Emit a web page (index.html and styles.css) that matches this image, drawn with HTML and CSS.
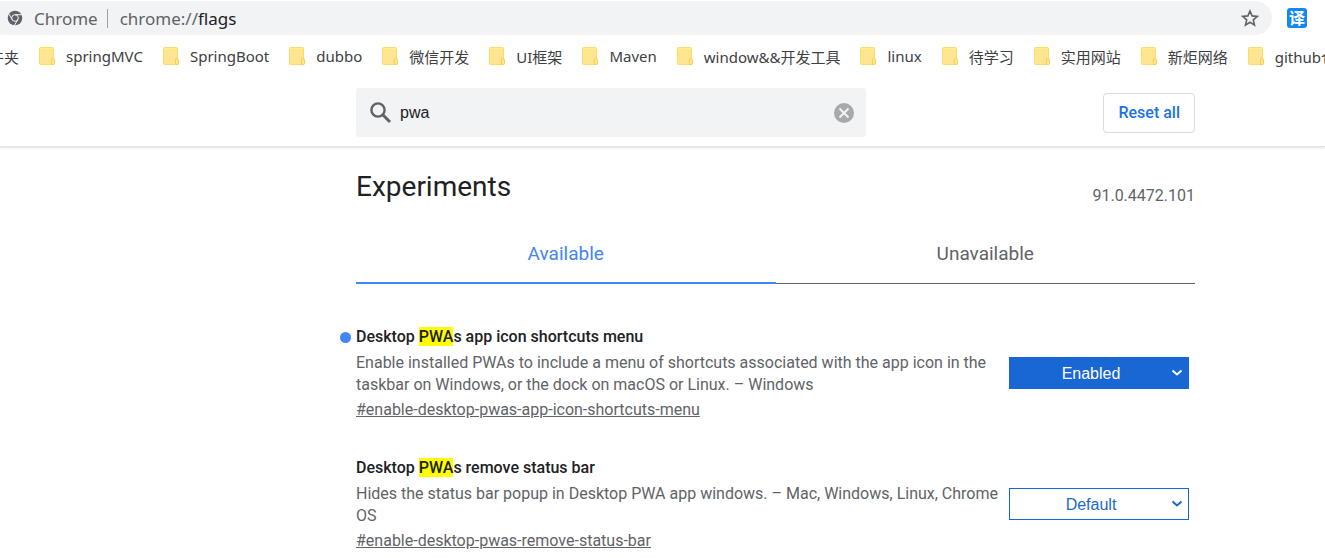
FILE: index.html
```html
<!DOCTYPE html>
<html lang="en">
<head>
<meta charset="utf-8">
<title>Experiments</title>
<link rel="stylesheet" href="styles.css">
</head>
<body>
<svg class="defs" aria-hidden="true">
  <symbol id="folder" viewBox="0 0 16 18">
    <rect x="0.5" y="0.5" width="14" height="17" rx="1" fill="#ffe592" stroke="#fbdc68"/>
    <path d="M1 1.500h13" stroke="#fff27d"/>
    <path d="M12.500 17.500v-4.500q0-1.500 1.500-1.500t1.500 1.500v3.500q0 1-1 1z" fill="#ffe592" stroke="#f8d04e"/>
  </symbol>
</svg>
<header class="browser">
  <div class="toolbar">
    <div class="omnibox">
      <svg class="site-icon" viewBox="0 0 16 16" aria-hidden="true">
        <circle cx="8" cy="8" r="7.300" fill="#5f6368"/>
        <circle cx="8" cy="8" r="3.300" fill="none" stroke="#f1f3f4" stroke-width="1"/>
        <path d="M8 4.700h6.800M5.200 9.600 1.800 3.800M10.800 9.600 7.400 15.400" fill="none" stroke="#f1f3f4" stroke-width="1"/>
      </svg>
      <span class="site-name">Chrome</span>
      <span class="url"><span class="scheme">chrome://</span>flags</span>
      <button class="star" type="button" aria-label="Bookmark this tab">
        <svg viewBox="0 0 18 18"><path d="M9 2l2.100 4.900 5.200.5-4 3.500 1.200 5.200L9 13.300l-4.500 2.800 1.200-5.200-4-3.500 5.200-.5z" fill="none" stroke="#5f6368" stroke-width="1.600"/></svg>
      </button>
    </div>
    <button class="translate" type="button">译</button>
  </div>
  <nav class="bookmarks">
    <a class="bookmark" href="#">件夹</a>
    <a class="bookmark" href="#"><svg><use href="#folder"/></svg>springMVC</a>
    <a class="bookmark" href="#"><svg><use href="#folder"/></svg>SpringBoot</a>
    <a class="bookmark" href="#"><svg><use href="#folder"/></svg>dubbo</a>
    <a class="bookmark" href="#"><svg><use href="#folder"/></svg>微信开发</a>
    <a class="bookmark" href="#"><svg><use href="#folder"/></svg>UI框架</a>
    <a class="bookmark" href="#"><svg><use href="#folder"/></svg>Maven</a>
    <a class="bookmark" href="#"><svg><use href="#folder"/></svg>window&amp;&amp;开发工具</a>
    <a class="bookmark" href="#"><svg><use href="#folder"/></svg>linux</a>
    <a class="bookmark" href="#"><svg><use href="#folder"/></svg>待学习</a>
    <a class="bookmark" href="#"><svg><use href="#folder"/></svg>实用网站</a>
    <a class="bookmark" href="#"><svg><use href="#folder"/></svg>新炬网络</a>
    <a class="bookmark" href="#"><svg><use href="#folder"/></svg>github仓</a>
  </nav>
</header>
<div class="search-bar">
  <div class="search">
    <svg class="search-icon" viewBox="0 0 22 22" aria-hidden="true"><circle cx="8" cy="8" r="6.600" fill="none" stroke="#5f6368" stroke-width="2.400"/><path d="M12.800 12.800 20 20" stroke="#5f6368" stroke-width="3"/></svg>
    <input class="search-input" type="text" value="pwa" aria-label="Search flags">
    <button class="clear" type="button" aria-label="Clear search">
      <svg viewBox="0 0 20 20"><circle cx="10" cy="10" r="10" fill="#a7aaad"/><path d="M5.500 5.500l9 9M14.500 5.500l-9 9" stroke="#f1f3f4" stroke-width="2"/></svg>
    </button>
  </div>
  <button class="reset" type="button">Reset all</button>
</div>
<main class="content">
  <div class="heading">
    <h1 class="title">Experiments</h1>
    <span class="version">91.0.4472.101</span>
  </div>
  <div class="tabs" role="tablist">
    <button class="tab tab-selected" type="button" role="tab" aria-selected="true">Available</button>
    <button class="tab" type="button" role="tab" aria-selected="false">Unavailable</button>
  </div>
  <section class="experiment">
    <div class="details">
      <h2 class="name name-changed">Desktop <mark>PWA</mark>s app icon shortcuts menu</h2>
      <p class="description">Enable installed PWAs to include a menu of shortcuts associated with the app icon in the taskbar on Windows, or the dock on macOS or Linux. – Windows</p>
      <a class="permalink" href="#enable-desktop-pwas-app-icon-shortcuts-menu">#enable-desktop-pwas-app-icon-shortcuts-menu</a>
    </div>
    <div class="choice choice-changed">
      <select aria-label="Desktop PWAs app icon shortcuts menu"><option>Default</option><option selected>Enabled</option><option>Disabled</option></select>
      <svg class="chevron" viewBox="0 0 12 8" aria-hidden="true"><path d="M1.500 1.500 6 5.500l4.500-4" fill="none" stroke="currentColor" stroke-width="2"/></svg>
    </div>
  </section>
  <section class="experiment">
    <div class="details">
      <h2 class="name">Desktop <mark>PWA</mark>s remove status bar</h2>
      <p class="description">Hides the status bar popup in Desktop PWA app windows. – Mac, Windows, Linux, Chrome OS</p>
      <a class="permalink" href="#enable-desktop-pwas-remove-status-bar">#enable-desktop-pwas-remove-status-bar</a>
    </div>
    <div class="choice">
      <select aria-label="Desktop PWAs remove status bar"><option selected>Default</option><option>Enabled</option><option>Disabled</option></select>
      <svg class="chevron" viewBox="0 0 12 8" aria-hidden="true"><path d="M1.500 1.500 6 5.500l4.500-4" fill="none" stroke="currentColor" stroke-width="2"/></svg>
    </div>
  </section>
</main>
</body>
</html>
```
FILE: styles.css
```css
* { box-sizing: border-box; }
body {
  margin: 0;
  overflow-x: hidden;
  background: #fff;
  color: #202124;
  font-family: Roboto, "Liberation Sans", sans-serif;
  font-size: 16px;
}
button {
  padding: 0;
  border: 0;
  background: none;
  font-family: inherit;
  cursor: pointer;
}
button svg { display: block; }
.defs { position: absolute; width: 0; height: 0; }

.browser { font-family: "Noto Sans", "Noto Sans CJK SC", sans-serif; }
.toolbar {
  display: flex;
  align-items: center;
  gap: 15px;
  padding: 1px 18px 0 0;
}
.omnibox {
  display: flex;
  flex: 1;
  align-items: center;
  height: 34px;
  margin-left: -12px;
  padding: 0 13px 0 19px;
  border-radius: 17px;
  background: #f1f3f4;
  font-size: 17px;
}
.site-icon { width: 16px; height: 16px; margin-right: 11px; }
.site-name {
  padding-right: 9px;
  border-right: 1px solid #9aa0a6;
  color: #5f6368;
  line-height: 19px;
}
.url { padding-left: 12px; color: #202124; line-height: 19px; }
.scheme { color: #5f6368; }
.star { margin-left: auto; }
.star svg { width: 18px; height: 18px; }
.translate {
  width: 20px;
  height: 20px;
  border-radius: 3px;
  background: #1388f5;
  color: #fff;
  font-size: 16px;
  font-weight: 700;
  line-height: 20px;
}
.bookmarks {
  display: flex;
  gap: 20px;
  margin-left: -11px;
  padding: 9px 0 8px;
  overflow: hidden;
}
.bookmark {
  display: flex;
  flex: none;
  align-items: center;
  gap: 11px;
  height: 24px;
  color: #3c4043;
  font-size: 15px;
  text-decoration: none;
}
.bookmark svg { width: 16px; height: 18px; }

.search-bar {
  display: flex;
  align-items: center;
  justify-content: space-between;
  padding: 12px 130px 9px 356px;
  border-bottom: 1px solid #e2e3e4;
  box-shadow: 0 1px 2px #e4e4e4;
}
.search {
  display: flex;
  flex: 0 1 510px;
  align-items: center;
  height: 49px;
  padding: 0 12px 0 14px;
  border-radius: 3px;
  background: #f1f3f4;
}
.search-icon { width: 22px; height: 22px; margin-right: 8px; }
.search-input {
  flex: 1;
  min-width: 0;
  padding: 0;
  border: 0;
  outline: 0;
  background: none;
  color: #202124;
  font: 16px "Liberation Sans", Arial, sans-serif;
}
.clear svg { width: 20px; height: 20px; }
.reset {
  height: 40px;
  padding: 0 14px;
  border: 1px solid #dadce0;
  border-radius: 4px;
  color: #1a73e8;
  font-size: 16px;
  font-weight: 500;
}

.content { padding: 22px 130px 0 356px; }
.heading {
  display: flex;
  align-items: flex-end;
  justify-content: space-between;
}
.title { margin: 0; font-size: 28px; font-weight: 400; line-height: 36px; }
.version { color: #5f6368; font-size: 16px; line-height: 18px; }
.tabs { display: flex; margin-top: 19px; }
.tab {
  flex: 1;
  height: 60px;
  border-bottom: 1px solid #5f6368;
  color: #5f6368;
  font-size: 19px;
}
.tab-selected { border-bottom: 2px solid #4285f4; color: #4285f4; }
.experiment {
  display: flex;
  align-items: center;
  gap: 8px;
  margin-top: 41px;
  padding-right: 6px;
}
.experiment + .experiment { margin-top: 35px; }
.details { flex: 1; }
.name { margin: 0; font-size: 16px; font-weight: 500; line-height: 24px; }
.name-changed::before {
  position: absolute;
  width: 11px;
  height: 11px;
  margin: 7px 0 0 -16px;
  border-radius: 50%;
  background: #4285f4;
  content: "";
}
mark { background: #ff0; color: inherit; }
.description { margin: 3px 0; color: #5f6368; line-height: 22px; }
.permalink { display: inline-block; color: #5f6368; line-height: 22px; }
.choice {
  display: grid;
  flex: 0 0 180px;
  align-items: center;
  color: #1967d2;
}
.choice select, .chevron { grid-area: 1 / 1; }
.choice select {
  width: 100%;
  height: 32px;
  padding: 0 16px 0 0;
  border: 1px solid #1967d2;
  border-radius: 0;
  appearance: none;
  background: #fff;
  color: inherit;
  font: 16px "Liberation Sans", Arial, sans-serif;
  text-align: center;
  text-align-last: center;
}
.choice-changed { color: #fff; }
.choice-changed select { background: #1967d2; }
.chevron {
  justify-self: end;
  width: 12px;
  height: 8px;
  margin-right: 6px;
  pointer-events: none;
}
```
